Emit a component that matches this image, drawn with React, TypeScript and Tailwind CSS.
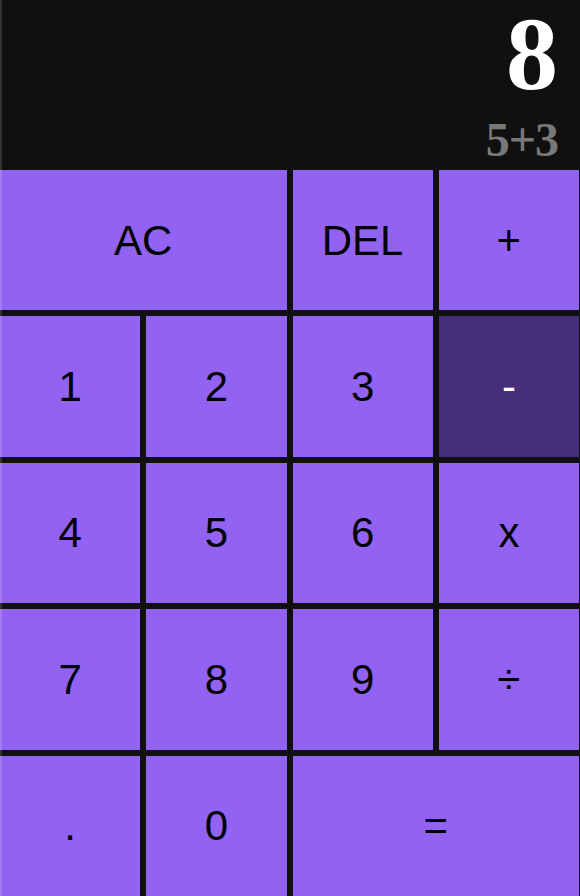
import React from "react";

type Key = {
  label: string;
  span?: boolean;
  dark?: boolean;
};

const keys: Key[] = [
  { label: "AC", span: true },
  { label: "DEL" },
  { label: "+" },
  { label: "1" },
  { label: "2" },
  { label: "3" },
  { label: "-", dark: true },
  { label: "4" },
  { label: "5" },
  { label: "6" },
  { label: "x" },
  { label: "7" },
  { label: "8" },
  { label: "9" },
  { label: "÷" },
  { label: "." },
  { label: "0" },
  { label: "=", span: true },
];

const App: React.FC = () => {
  return (
    <div className="relative w-[580px] h-[896px] bg-[#101010] overflow-hidden">
      <div className="w-[579px]">
        {/* Display */}
        <div
          className="h-[170px] flex flex-col items-end pr-[21px] font-bold"
          style={{ fontFamily: '"Liberation Serif", "Times New Roman", serif' }}
        >
          <div className="text-white text-[104px] leading-[108px]">8</div>
          <div className="text-[#787878] text-[48px] leading-none mt-[8px] tracking-[-1px]">
            5+3
          </div>
        </div>

        {/* Keypad */}
        <div
          className="grid grid-cols-4 grid-rows-5 gap-[6px] h-[726px]"
          style={{ fontFamily: '"Liberation Sans", Arial, sans-serif' }}
        >
          {keys.map((k) => (
            <button
              key={k.label}
              className={
                (k.span ? "col-span-2 " : "") +
                (k.dark
                  ? "bg-[#472e7a] text-white "
                  : "bg-[#9263f2] text-black ") +
                "flex items-center justify-center text-[42px]"
              }
            >
              {k.label}
            </button>
          ))}
        </div>
      </div>

      {/* left edge highlight */}
      <div className="absolute left-0 top-0 w-[2px] h-full bg-white/15" />
    </div>
  );
};

export default App;
